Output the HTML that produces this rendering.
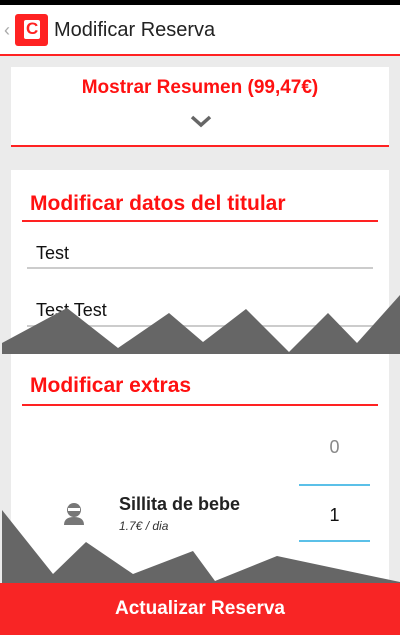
<!DOCTYPE html>
<html><head><meta charset="utf-8"><style>
*{margin:0;padding:0;box-sizing:border-box}
body{width:400px;height:635px;overflow:hidden;background:#ebebeb;font-family:"Liberation Sans",Roboto,sans-serif;position:relative}
.a{position:absolute}
</style></head><body>
<div class="a" style="left:0;top:0;width:400px;height:5px;background:#000"></div>
<div class="a" style="left:0;top:5px;width:400px;height:50px;background:#fff"></div>
<div class="a" style="left:0;top:54px;width:400px;height:2px;background:#f22"></div>
<div class="a" style="left:4px;top:20px;color:#aaa;font-size:18px">‹</div>
<div class="a" style="left:15px;top:14px;width:33px;height:32px;background:#f22;border-radius:3px"></div>
<div class="a" style="left:24px;top:20px;width:16px;height:19px;background:#fff;border-radius:2px"></div>
<div class="a" style="left:26px;top:19px;color:#f22;font-weight:bold;font-size:17px">C</div>
<div class="a" style="left:54px;top:19px;font-size:20px;color:#222">Modificar Reserva</div>

<div class="a" style="left:11px;top:67px;width:378px;height:80px;background:#fff;border-bottom:2px solid #f22"></div>
<div class="a" style="left:0;top:77px;width:400px;text-align:center;color:#f11;font-weight:bold;font-size:19px">Mostrar Resumen (99,47€)</div>
<svg class="a" style="left:190px;top:114px" width="22" height="14"><path d="M2 3 L11 11 L20 3" stroke="#666" stroke-width="3.5" fill="none"/></svg>

<div class="a" style="left:11px;top:170px;width:378px;height:465px;background:#fff"></div>
<div class="a" style="left:30px;top:192px;color:#f11;font-weight:bold;font-size:21px">Modificar datos del titular</div>
<div class="a" style="left:22px;top:220px;width:356px;height:2px;background:#f22"></div>
<div class="a" style="left:36px;top:243px;font-size:18px;color:#111">Test</div>
<div class="a" style="left:27px;top:267px;width:346px;height:2px;background:#ccc"></div>
<div class="a" style="left:36px;top:300px;font-size:18px;color:#111">Test Test</div>
<div class="a" style="left:27px;top:325px;width:346px;height:2px;background:#ccc"></div>

<div class="a" style="left:30px;top:374px;color:#f11;font-weight:bold;font-size:21px">Modificar extras</div>
<div class="a" style="left:22px;top:404px;width:356px;height:2px;background:#f22"></div>
<div class="a" style="left:299px;top:437px;width:71px;text-align:center;font-size:18px;color:#888">0</div>
<div class="a" style="left:299px;top:484px;width:71px;height:2px;background:#5bc0e8"></div>
<div class="a" style="left:299px;top:505px;width:71px;text-align:center;font-size:18px;color:#111">1</div>
<div class="a" style="left:299px;top:540px;width:71px;height:2px;background:#5bc0e8"></div>
<svg class="a" style="left:63px;top:502px" width="22" height="24"><circle cx="11" cy="8" r="7" fill="#777"/><rect x="5" y="6" width="12" height="3" fill="#fff"/><path d="M1 23 Q1 15 11 15 Q21 15 21 23Z" fill="#777"/></svg>
<div class="a" style="left:119px;top:494px;font-weight:bold;font-size:18px;color:#222">Sillita de bebe</div>
<div class="a" style="left:119px;top:519px;font-style:italic;font-size:12px;color:#333">1.7€ / dia</div>

<svg class="a" style="left:0;top:0" width="400" height="635">
<polygon fill="#666" points="2,343 67,308 118,348 169,313 203,342 246,309 289,352 328,313 357,343 400,295 400,354 2,354"/>
<polygon fill="#666" points="2,510 53,574 86,542 133,574 193,551 215,581 277,556 400,582 400,584 2,584"/>
</svg>
<div class="a" style="left:0;top:583px;width:400px;height:52px;background:#f82525;color:#fff;font-weight:bold;font-size:19px;text-align:center;line-height:52px">Actualizar Reserva</div>
</body></html>
